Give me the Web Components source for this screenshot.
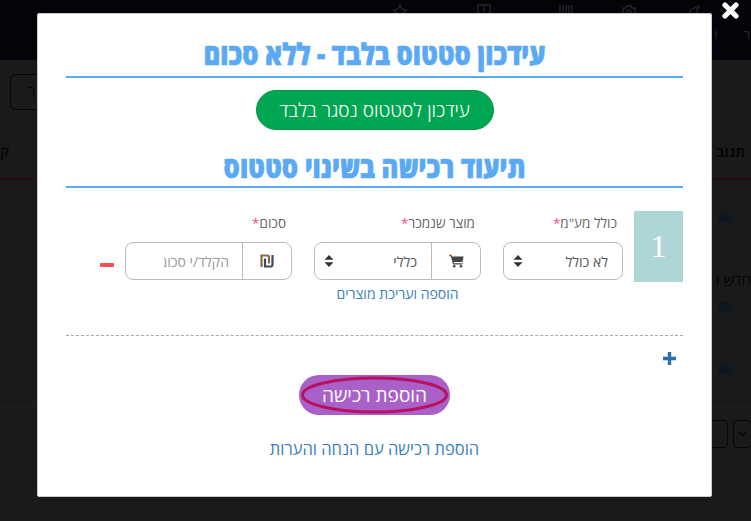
<!DOCTYPE html>
<html lang="he">
<head>
<meta charset="utf-8">
<title>רכישה</title>
<style>
html, body { margin: 0; height: 100%; background: #1a1a1a; overflow: hidden; }
body { font-family: "Open Sans", "Liberation Sans", sans-serif; }
</style>
</head>
<body>
<back-page></back-page>
<modal-box>
	<section-title>עידכון סטטוס בלבד - ללא סכום</section-title>
	<pill-button color="green">עידכון לסטטוס נסגר בלבד</pill-button>
	<section-title second>תיעוד רכישה בשינוי סטטוס</section-title>
	<purchase-row></purchase-row>
	<add-area></add-area>
</modal-box>

<script>
const ICONS = {
	cart: `<svg width="15" height="14" viewBox="0 0 15 14"><path d="M0 1h2.600l.6 1.500H14.600l-1.200 5.500H4.700l.3 1.300h8.600v1.200H4L1.900 2.300H0z" fill="#444"/><circle cx="5.200" cy="12.300" r="1.300" fill="#444"/><circle cx="12" cy="12.300" r="1.300" fill="#444"/><path d="M0 1h2.600" stroke="#e0902f" stroke-width="1"/></svg>`,
	shekel: `<svg width="14" height="14" viewBox="0 0 14 14" fill="none" stroke-width="2.200"><path d="M1.500 13V1.500H7.500Q9 1.500 9 3.500V9.500" stroke="#8a6a45"/><path d="M5 4.500V12.500H10.500Q12.500 12.500 12.500 10.500V1" stroke="#3d4a60"/></svg>`,
	updown: `<svg width="10" height="14" viewBox="0 0 10 14"><path d="M5 1l4.500 4.800H.5zM5 13L.5 8.200h9z" fill="#333"/></svg>`,
	comments: `<svg width="15" height="12" viewBox="0 0 15 12"><ellipse cx="6" cy="4.200" rx="6" ry="4.200" fill="#0c1722"/><path d="M2 6.500L.8 9.500 5 7.800z" fill="#0c1722"/><path d="M13 3.200c1.300.8 2 1.900 2 3.100 0 1.100-.7 2.100-1.700 2.800l.9 2.500-3.200-1.700c-1.900.3-3.700-.1-4.800-1 3.800.1 7.200-2 6.800-5.700z" fill="#0c1722"/></svg>`
};

// the dim page behind the dialog
const backTpl = document.createElement("template");
backTpl.innerHTML = `
<style>
	:host { display: block; height: 100vh; background: #1a1a1a; color: #060606; direction: rtl; overflow: hidden; font-size: 15px; }
	.top { height: 60px; background: #03040a; padding: 4px 48px 0 0; box-sizing: border-box; color: #26272c; font-size: 13px; }
	.icons { display: flex; height: 21px; }
	.top svg { width: 16px; height: 14px; fill: none; stroke: #26272c; stroke-width: 1.300; }
	.i2 { margin-right: 50px; }
	.i3 { margin-right: 47px; }
	.i4 { margin-right: 66px; }
	.i5 { margin-right: 68px; }
	.labels { display: flex; justify-content: flex-start; gap: 26px; margin-right: -47px; }
	.tool { height: 68px; padding: 14px 0 0 10px; box-sizing: border-box; direction: ltr; }
	.tool div { width: 60px; height: 36px; border: 1px solid #060606; border-radius: 6px; box-sizing: border-box; padding: 6px 0 0 17px; }
	.head { height: 47px; padding: 0 6px 3px 0; border-bottom: 2px solid #2a0b0e; display: flex; justify-content: space-between; align-items: center; font-weight: 700; font-size: 14px; }
	.rows { height: 228px; padding: 33px 18px 0 0; box-sizing: border-box; border-bottom: 1px solid #1f1f1f; }
	.rows p { margin: 0; height: 12px; }
	.rows svg { display: block; }
	.rows .txt { margin: 45px -18px 0 0; height: 20px; font-size: 15px; white-space: nowrap; }
	.rows .b { margin-top: 12px; }
	.rows .c { margin-top: 51px; }
	.pager { display: flex; gap: 5px; padding: 12px 0 0 0; margin-right: -1px; }
	.pager div { height: 28px; border: 1px solid #060606; border-radius: 4px; box-sizing: border-box; }
	.pager .p1 { width: 19px; display: flex; align-items: center; justify-content: center; }
	.pager .p2 { width: 60px; }
</style>
<div class="top">
	<div class="icons">
		<svg viewBox="0 0 16 14"><path d="M3 13V6L10 3V13M12 1V5"/></svg>
		<svg class="i2" viewBox="0 0 16 14"><path d="M2 4H5L6 2H10L11 4H14V13H2zM8 6A2 2 0 1 0 8.100 6"/></svg>
		<svg class="i3" viewBox="0 0 16 14"><path d="M2 1V13M5 1V13M8 1V13M11 1V13M14 1V13"/></svg>
		<svg class="i4" viewBox="0 0 16 14"><path d="M2 1H14V13H2zM8 1V8"/></svg>
		<svg class="i5" viewBox="0 0 16 14"><path d="M8 1L10 5L14 6L11 9L12 13L8 11L4 13L5 9L2 6L6 5z"/></svg>
	</div>
	<div class="labels"><span>ר</span><span>ו</span></div>
</div>
<div class="tool"><div>ר</div></div>
<div class="head"><span>תגוב</span><span>ק</span></div>
<div class="rows">
	<p>${ICONS.comments}</p>
	<p class="txt">חדש ו</p>
	<p class="b">${ICONS.comments}</p>
	<p class="c">${ICONS.comments}</p>
</div>
<div class="pager">
	<div class="p1"><svg width="9" height="6" viewBox="0 0 9 6"><path d="M1 1l3.500 3.500L8 1" fill="none" stroke="#060606" stroke-width="1.400"/></svg></div>
	<div class="p2"></div>
</div>
`;
class BackPage extends HTMLElement {
	constructor() {
		super();
		this.attachShadow({mode: "open"}).appendChild(backTpl.content.cloneNode(true));
	}
}
customElements.define("back-page", BackPage);

const modalTpl = document.createElement("template");
modalTpl.innerHTML = `
<style>
	:host { position: absolute; left: 37px; top: 13px; width: 675px; height: 484px; box-sizing: border-box; padding: 21px 28px 0; background: #fff; border: 1px solid #ccc; border-radius: 2px; direction: rtl; color: #555; }
	.close { position: absolute; left: 684px; top: -12px; width: 17px; height: 17px; }
</style>
<svg class="close" viewBox="0 0 17 17"><path d="M3 3L14 14M14 3L3 14" stroke="#fff" stroke-width="5.200" stroke-linecap="round"/></svg>
<slot></slot>
`;
class ModalBox extends HTMLElement {
	constructor() {
		super();
		this.attachShadow({mode: "open"}).appendChild(modalTpl.content.cloneNode(true));
	}
}
customElements.define("modal-box", ModalBox);

const titleTpl = document.createElement("template");
titleTpl.innerHTML = `
<style>
	:host { display: block; height: 41px; border-bottom: 2px solid #5aa9f5; text-align: center; color: #5aa9f5; }
	:host([second]) { margin-top: 18px; height: 38px; }
	h2 { margin: 0; font: 800 27px/38px "Open Sans", "Liberation Sans", sans-serif; transform: scale(.945, 1.100); -webkit-text-stroke: .6px #5aa9f5; }
</style>
<h2><slot></slot></h2>
`;
class SectionTitle extends HTMLElement {
	constructor() {
		super();
		this.attachShadow({mode: "open"}).appendChild(titleTpl.content.cloneNode(true));
	}
}
customElements.define("section-title", SectionTitle);

const pillTpl = document.createElement("template");
pillTpl.innerHTML = `
<style>
	:host { display: flex; justify-content: center; margin-top: 12px; }
	button { height: 40px; border-radius: 20px; font: 300 19px "Open Sans", "Liberation Sans", sans-serif; color: #fff; cursor: pointer; padding: 0; }
	:host([color=green]) button { width: 238px; background: #00a651; border: 1px solid #089447; }
	:host([color=purple]) button { width: 151px; background: #a961c9; border: none; font-weight: 400; }
	.wrap { position: relative; display: flex; }
</style>
<div class="wrap"><button><slot></slot></button><slot name="over"></slot></div>
`;
class PillButton extends HTMLElement {
	constructor() {
		super();
		this.attachShadow({mode: "open"}).appendChild(pillTpl.content.cloneNode(true));
	}
}
customElements.define("pill-button", PillButton);

const fieldTpl = document.createElement("template");
fieldTpl.innerHTML = `
<style>
	:host { display: block; font-size: 13.500px; }
	label { display: block; height: 31px; line-height: 24px; color: #666; padding-right: 6px; }
	i { color: #f04a80; font-style: normal; }
	.box { display: flex; height: 38px; border: 1px solid #bbb; border-radius: 8px; box-sizing: border-box; overflow: hidden; }
	.icon { flex: 0 0 48px; display: flex; align-items: center; justify-content: center; border-left: 1px solid #bbb; }
	.val { flex: 1; display: flex; align-items: center; justify-content: space-between; padding: 0 14px 0 9px; color: #555; font-size: 14px; }
	.ph { color: #999; width: 65px; overflow: hidden; white-space: nowrap; }
	.ph-wrap { padding-right: 13px; justify-content: flex-start; }
</style>
<label><slot name="label"></slot><i>*</i></label>
<div class="box"></div>
`;
class FormField extends HTMLElement {
	constructor() {
		super();
		this.attachShadow({mode: "open"}).appendChild(fieldTpl.content.cloneNode(true));
		this.style.width = this.getAttribute("w") + "px";
		const box = this.shadowRoot.querySelector(".box");
		const icon = this.getAttribute("icon");
		if (icon) box.innerHTML += `<div class="icon">${ICONS[icon]}</div>`;
		const ph = this.getAttribute("placeholder");
		if (ph) box.innerHTML += `<div class="val ph-wrap"><span class="ph">${ph}</span></div>`;
		else box.innerHTML += `<div class="val"><span>${this.getAttribute("value")}</span>${ICONS.updown}</div>`;
	}
}
customElements.define("form-field", FormField);

const rowTpl = document.createElement("template");
rowTpl.innerHTML = `
<style>
	:host { display: flex; margin-top: 23px; height: 124px; border-bottom: 1px dashed #aaa; font-family: "Open Sans", "Liberation Sans", sans-serif; }
	.num { flex: 0 0 49px; height: 71px; background: #aed6d6; color: #fff; font: 32px/71px "Liberation Serif", serif; text-align: center; margin-left: 11px; }
	.mid { margin: 0 22px; }
	a { display: block; text-align: center; font-size: 14px; color: #3a7ebd; margin-top: 4px; text-decoration: none; }
	.minus { width: 14px; height: 4px; background: #ef4f55; border-radius: 1px; margin: 52px 11px 0 0; }
</style>
<div class="num">1</div>
<form-field w="120" value="לא כולל"><span slot="label">כולל מע"מ</span></form-field>
<div class="mid">
	<form-field w="167" icon="cart" value="כללי"><span slot="label">מוצר שנמכר</span></form-field>
	<a href="#">הוספה ועריכת מוצרים</a>
</div>
<form-field w="167" icon="shekel" placeholder="הקלד/י סכום"><span slot="label">סכום</span></form-field>
<div class="minus"></div>
`;
class PurchaseRow extends HTMLElement {
	constructor() {
		super();
		this.attachShadow({mode: "open"}).appendChild(rowTpl.content.cloneNode(true));
	}
}
customElements.define("purchase-row", PurchaseRow);

const addTpl = document.createElement("template");
addTpl.innerHTML = `
<style>
	:host { display: block; font-family: "Open Sans", "Liberation Sans", sans-serif; }
	.plus { display: block; margin: 16px 7px 0 0; }
	pill-button { margin-top: 10px; }
	a { display: block; text-align: center; margin-top: 22px; color: #3a7ebd; font-size: 16.500px; text-decoration: none; }
	svg.ring { position: absolute; left: 2px; top: 1px; }
</style>
<svg class="plus" width="13" height="13" viewBox="0 0 13 13"><path d="M6.500 0V13M0 6.500H13" stroke="#2f6ea8" stroke-width="3.400"/></svg>
<pill-button color="purple">הוספת רכישה
	<svg slot="over" class="ring" width="147" height="38" viewBox="0 0 147 38"><ellipse cx="73.500" cy="19" rx="72" ry="17" fill="none" stroke="#b5135f" stroke-width="3"/></svg>
</pill-button>
<a href="#">הוספת רכישה עם הנחה והערות</a>
`;
class AddArea extends HTMLElement {
	constructor() {
		super();
		this.attachShadow({mode: "open"}).appendChild(addTpl.content.cloneNode(true));
	}
}
customElements.define("add-area", AddArea);
</script>
</body>
</html>
